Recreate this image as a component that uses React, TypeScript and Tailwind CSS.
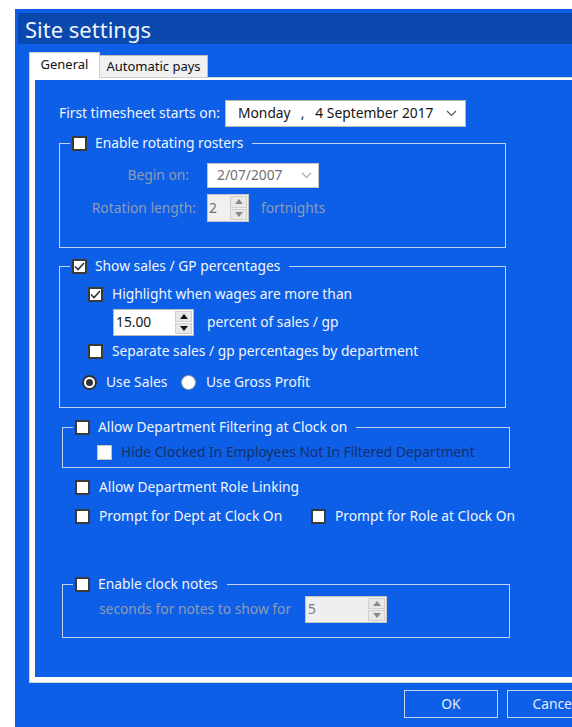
import React from "react";

const FONT = { fontFamily: '"Noto Sans", "Open Sans", Arial, sans-serif' };

function CheckBox({ checked = false, disabled = false }: { checked?: boolean; disabled?: boolean }) {
  return (
    <span
      className={
        "flex h-[15px] w-[15px] shrink-0 items-center justify-center bg-white " +
        (disabled ? "border border-[#c4c4c4]" : "border-2 border-[#3a3a3a]")
      }
    >
      {checked && (
        <svg width="11" height="9" viewBox="0 0 11 9" fill="none">
          <path d="M1 4.5 L4 7.5 L10 1" stroke="#333" strokeWidth="1.6" />
        </svg>
      )}
    </span>
  );
}

function Radio({ checked = false }: { checked?: boolean }) {
  return (
    <span
      className={
        "flex h-[15px] w-[15px] shrink-0 items-center justify-center rounded-full bg-white " +
        (checked ? "border-2 border-[#333]" : "border border-[#9a9a9a]")
      }
    >
      {checked && <span className="h-[7px] w-[7px] rounded-full bg-[#333]" />}
    </span>
  );
}

function Chevron({ color = "#555" }: { color?: string }) {
  return (
    <svg width="11" height="7" viewBox="0 0 11 7" fill="none">
      <path d="M1 1 L5.5 5.5 L10 1" stroke={color} strokeWidth="1.2" />
    </svg>
  );
}

function SpinButtons({ disabled = false }: { disabled?: boolean }) {
  const fill = disabled ? "#8a8a8a" : "#111";
  return (
    <div className="flex h-full w-[19px] shrink-0 flex-col gap-[1px] p-[1px]">
      <div className="flex flex-1 items-center justify-center border border-[#cfcfcf] bg-[#e8e8e8]">
        <svg width="8" height="5" viewBox="0 0 8 5">
          <path d="M0 5 L4 0 L8 5 Z" fill={fill} />
        </svg>
      </div>
      <div className="flex flex-1 items-center justify-center border border-[#cfcfcf] bg-[#e8e8e8]">
        <svg width="8" height="5" viewBox="0 0 8 5">
          <path d="M0 0 L8 0 L4 5 Z" fill={fill} />
        </svg>
      </div>
    </div>
  );
}

function Legend({ label, checked = false }: { label: string; checked?: boolean }) {
  return (
    <legend className="ml-[10px] flex h-[18px] items-center gap-[8px] pl-[2px] pr-[9px]">
      <CheckBox checked={checked} />
      <span className="leading-[18px] text-[#f2f5fb]">{label}</span>
    </legend>
  );
}

export default function App() {
  return (
    <div
      className="h-[727px] w-[572px] overflow-hidden bg-white pl-[15px] pt-[9px] text-[13.8px]"
      style={FONT}
    >
      <div className="flex h-[718px] w-[620px] flex-col bg-[#0c5fe6]">
        {/* title bar */}
        <div className="ml-[3px] mt-[4px] flex h-[31px] items-center bg-[#0a48ad] pl-[7px]">
          <span className="text-[22px] leading-none text-[#eef3fc]">Site settings</span>
        </div>

        {/* tabs */}
        <div className="ml-[14px] mt-[8px] flex h-[25px] items-end text-[13px]">
          <div className="relative z-10 -mb-px flex h-[26px] w-[71px] items-center justify-center border border-b-0 border-[#cfcfcf] bg-white pb-[2px] text-[#111]">
            General
          </div>
          <div className="flex h-[22px] w-[108px] items-center justify-center border border-b-0 border-l-0 border-[#bdbdbd] bg-[#f0f0f0] text-[#111]">
            Automatic pays
          </div>
        </div>

        {/* tab page */}
        <div className="ml-[14px] w-[580px] border border-[#cfcfcf] bg-white pb-[5px] pl-[5px] pt-[2px]">
          <div className="flex h-[597px] flex-col bg-[#0c5fe6] text-[#f2f5fb]">
            {/* first timesheet */}
            <div className="mt-[20px] flex h-[27px] items-center">
              <span className="ml-[24px] w-[166px]">First timesheet starts on:</span>
              <div className="flex h-[27px] w-[241px] items-center border border-[#b9b9b9] bg-white pl-[12px] pr-[8px] text-[#141414]">
                <span>Monday</span>
                <span className="ml-[10px]">,</span>
                <span className="ml-[11px]">4 September 2017</span>
                <span className="ml-auto">
                  <Chevron />
                </span>
              </div>
            </div>

            {/* rotating rosters */}
            <fieldset className="ml-[24px] mt-[7px] w-[447px] border border-[#c6d3ee] pb-[25px]">
              <Legend label="Enable rotating rosters" />
              <div className="mt-[11px] flex h-[25px] items-center">
                <span className="w-[136px] pr-[7px] text-right text-[#8f9bb4]">Begin on:</span>
                <div className="ml-[11px] flex h-[25px] w-[112px] items-center border border-[#c4c4c4] bg-white pl-[9px] pr-[6px] text-[#707070]">
                  <span>2/07/2007</span>
                  <span className="ml-auto">
                    <Chevron color="#aaa" />
                  </span>
                </div>
              </div>
              <div className="mt-[6px] flex h-[28px] items-center">
                <span className="w-[136px] text-right text-[#8f9bb4]">Rotation length:</span>
                <div className="ml-[11px] flex h-[28px] w-[42px] items-stretch border border-[#c4c4c4] bg-[#f0f0f0]">
                  <span className="flex flex-1 items-center pl-[1px] text-[#707070]">2</span>
                  <SpinButtons disabled />
                </div>
                <span className="ml-[12px] text-[#8f9bb4]">fortnights</span>
              </div>
            </fieldset>

            {/* sales / gp */}
            <fieldset className="ml-[24px] mt-[9px] w-[447px] border border-[#c6d3ee] pb-[16px]">
              <Legend label="Show sales / GP percentages" checked />
              <div className="ml-[28px] mt-[10px] flex h-[18px] items-center gap-[9px]">
                <CheckBox checked />
                <span>Highlight when wages are more than</span>
              </div>
              <div className="mt-[6px] flex h-[27px] items-center">
                <div className="ml-[53px] flex h-[27px] w-[81px] items-stretch border border-[#b9b9b9] bg-white">
                  <span className="flex flex-1 items-center pl-[2px] text-[#141414]">15.00</span>
                  <SpinButtons />
                </div>
                <span className="ml-[13px]">percent of sales / gp</span>
              </div>
              <div className="ml-[28px] mt-[6px] flex h-[18px] items-center gap-[9px]">
                <CheckBox />
                <span>Separate sales / gp percentages by department</span>
              </div>
              <div className="ml-[22px] mt-[13px] flex h-[18px] items-center">
                <Radio checked />
                <span className="ml-[9px] w-[75px]">Use Sales</span>
                <Radio />
                <span className="ml-[10px]">Use Gross Profit</span>
              </div>
            </fieldset>

            {/* department filtering */}
            <fieldset className="ml-[27px] mt-[10px] w-[448px] border border-[#c6d3ee] pb-[6px]">
              <Legend label="Allow Department Filtering at Clock on" />
              <div className="ml-[34px] mt-[7px] flex h-[18px] items-center gap-[9px]">
                <CheckBox disabled />
                <span className="text-[#16306a]">Hide Clocked In Employees Not In Filtered Department</span>
              </div>
            </fieldset>

            <div className="ml-[40px] mt-[10px] flex h-[18px] items-center gap-[9px]">
              <CheckBox />
              <span>Allow Department Role Linking</span>
            </div>

            <div className="ml-[40px] mt-[11px] flex h-[18px] items-center">
              <div className="flex w-[236px] items-center gap-[9px]">
                <CheckBox />
                <span>Prompt for Dept at Clock On</span>
              </div>
              <div className="flex items-center gap-[9px]">
                <CheckBox />
                <span>Prompt for Role at Clock On</span>
              </div>
            </div>

            {/* clock notes */}
            <fieldset className="ml-[27px] mt-[50px] w-[448px] border border-[#c6d3ee] pb-[14px]">
              <Legend label="Enable clock notes" />
              <div className="mt-[3px] flex h-[27px] items-center">
                <span className="ml-[36px] w-[206px] text-[#8f9bb4]">seconds for notes to show for</span>
                <div className="flex h-[27px] w-[82px] items-stretch border border-[#c4c4c4] bg-[#efefef]">
                  <span className="flex flex-1 items-center pl-[2px] text-[#7a7a7a]">5</span>
                  <SpinButtons disabled />
                </div>
              </div>
            </fieldset>
          </div>
        </div>

        {/* dialog buttons */}
        <div className="ml-[389px] mt-[7px] flex gap-[9px]">
          <button className="flex h-[28px] w-[94px] items-center justify-center border border-[#c9d6f0] text-[#e6edfa]">
            OK
          </button>
          <button className="flex h-[28px] w-[94px] items-center justify-center border border-[#c9d6f0] text-[#e6edfa]">
            Cancel
          </button>
        </div>
      </div>
    </div>
  );
}
